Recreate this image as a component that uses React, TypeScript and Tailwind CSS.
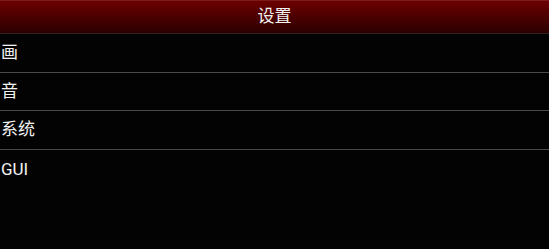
export default function App() {
  const items = [
    { t: "画", h: "h-[39px]" },
    { t: "音", h: "h-[38px]" },
    { t: "系统", h: "h-[39px]" },
    { t: "GUI", h: "h-[39px]" },
  ];
  return (
    <div
      className="w-[549px] h-[249px] bg-[#030303] overflow-hidden text-[#f2f2f2]"
      style={{ fontFamily: 'Roboto, "Noto Sans CJK SC", sans-serif' }}
    >
      <div className="h-[34px] border-t border-t-[#7a1a1a] bg-gradient-to-b from-[#6c0000] to-[#2c0000] flex items-center justify-center text-[17px] border-b border-b-[#2e2424]">
        设置
      </div>
      {items.map((it, i) => (
        <div
          key={i}
          className={
            it.h +
            " flex items-center pl-[1px] text-[17px] " +
            (i < 3 ? "border-b border-b-[#4a4a4a]" : "")
          }
        >
          {it.t}
        </div>
      ))}
    </div>
  );
}
